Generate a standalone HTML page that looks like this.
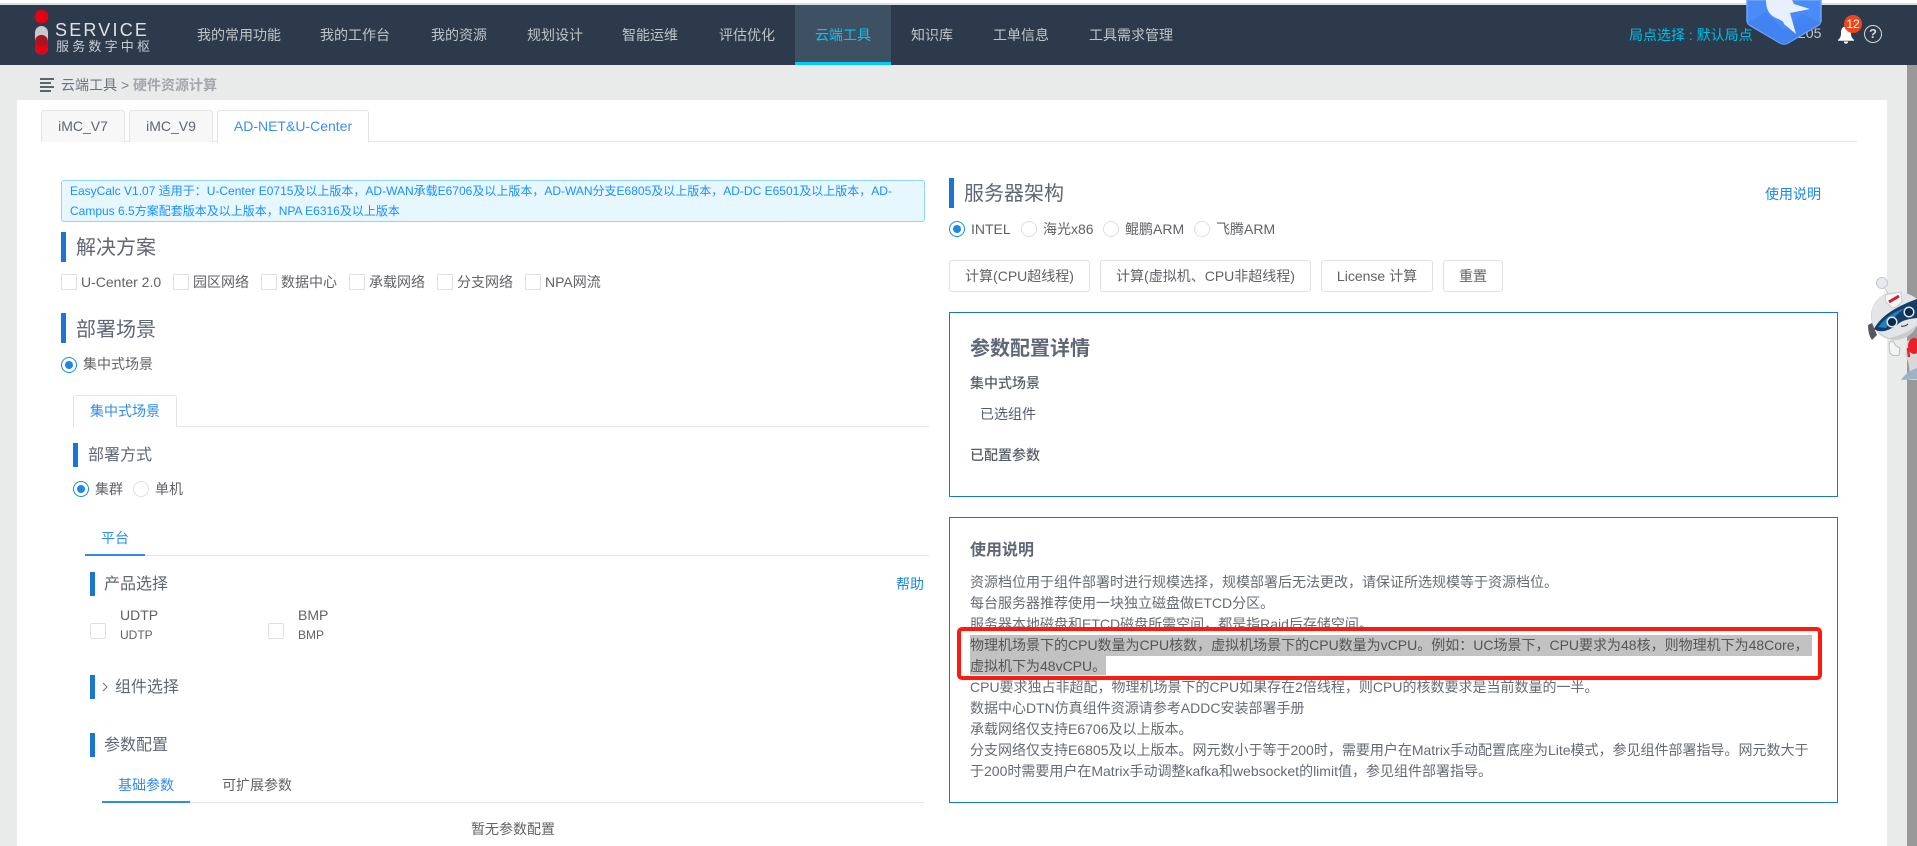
<!DOCTYPE html>
<html lang="zh-CN">
<head>
<meta charset="utf-8">
<title>硬件资源计算</title>
<style>
html,body{margin:0;padding:0;width:1917px;height:846px;overflow:hidden;background:#fff}
body{position:relative;font-family:"Liberation Sans","Noto Sans CJK SC",sans-serif;font-size:14px;color:#606266}
.a,.t,.bar,.cb,.rd{position:absolute;box-sizing:border-box}
.t{white-space:nowrap;line-height:20px;height:20px}
.nav{color:#bfc4ca;font-size:14px}
.blue{color:#1e88e5}
.bar{width:5px;background:#1976d2}
.h20{font-size:20px;color:#5f6774;line-height:30px;height:30px}
.h16{font-size:16px;color:#5f6774;line-height:24px;height:24px}
.cb{width:16px;height:16px;border:1px solid #dcdfe6;border-radius:2px;background:#fff}
.rd{width:16px;height:16px;border:1px solid #dcdfe6;border-radius:50%;background:#fff}
.rd.on{border-color:#1e88e5}
.rd.on:after{content:"";position:absolute;left:3px;top:3px;width:8px;height:8px;border-radius:50%;background:#1e88e5}
.tab{position:absolute;box-sizing:border-box;top:110px;height:32px;border:1px solid #e2e4e8;border-bottom:0;border-radius:3px 3px 0 0;background:#f7f7f7;text-align:center;line-height:30px;color:#5f6774}
.btn{position:absolute;box-sizing:border-box;top:260px;height:32px;border:1px solid #dcdfe6;border-radius:3px;background:#fff;text-align:center;line-height:30px;color:#606266;white-space:nowrap}
.box{position:absolute;box-sizing:border-box;left:949px;width:889px;border:1px solid #1976d2}
.hl{position:absolute;background:#c2c2c2}
</style>
</head>
<body>
<!-- top strip -->
<div class="a" style="left:0;top:3px;width:1917px;height:2px;background:#dedede"></div>
<!-- header -->
<div class="a" style="left:0;top:5px;width:1917px;height:60px;background:#2d3a4b"></div>
<div class="a" style="left:795px;top:5px;width:96px;height:60px;background:#3e5163"></div>
<div class="a" style="left:795px;top:62px;width:96px;height:3px;background:#00ccff"></div>
<!-- logo -->
<svg class="a" style="left:30px;top:8px" width="24" height="50" viewBox="0 0 24 50">
<rect x="5" y="18" width="13" height="28.500" rx="6.500" fill="#c9c9c9"/>
<path d="M5 33.500a6.500 6.500 0 0 1 13 0v6.500a6.500 6.500 0 0 1-13 0z" fill="#e60012"/>
<ellipse cx="11.500" cy="32.500" rx="6" ry="5.500" fill="#a81420"/>
<circle cx="11.500" cy="8.700" r="6.800" fill="#e60012"/>
</svg>
<div class="t" style="left:55px;top:20px;font-size:18px;letter-spacing:2.200px;color:#dfe2e5">SERVICE</div>
<div class="t" style="left:56px;top:37px;font-size:13px;letter-spacing:3.200px;color:#c9cdd2">服务数字中枢</div>
<!-- nav -->
<div class="t nav" style="left:197px;top:25px">我的常用功能</div>
<div class="t nav" style="left:320px;top:25px">我的工作台</div>
<div class="t nav" style="left:431px;top:25px">我的资源</div>
<div class="t nav" style="left:527px;top:25px">规划设计</div>
<div class="t nav" style="left:622px;top:25px">智能运维</div>
<div class="t nav" style="left:719px;top:25px">评估优化</div>
<div class="t nav" style="left:815px;top:25px;color:#00c8f5">云端工具</div>
<div class="t nav" style="left:911px;top:25px">知识库</div>
<div class="t nav" style="left:993px;top:25px">工单信息</div>
<div class="t nav" style="left:1089px;top:25px">工具需求管理</div>
<div class="t" style="left:1629px;top:25px;color:#00bfe6">局点选择 : 默认局点</div>
<div class="t" style="left:1798px;top:23px;color:#c5c9ce;font-size:14px">205</div>
<!-- shield -->
<svg class="a" style="left:1746px;top:0" width="76" height="47" viewBox="0 0 76 47">
<path d="M1 0V20Q1 24 5 26L34 43Q38 45 42 43L71 26Q75 24 75 20V0Z" fill="#4a8cf7" stroke="#6ea6fa" stroke-width="1.500"/>
<path d="M1 23L20 12L38 30L56 14L75 23L42 43Q38 45 34 43Z" fill="#3f7ff0" opacity=".7"/>
<path d="M20 0Q20 14 30 18Q38 21 38 24L50 34L44 13L64 9L48 4L46 0Z" fill="#e8f0fe"/>
</svg>
<!-- bell -->
<svg class="a" style="left:1836px;top:25px" width="20" height="19" viewBox="0 0 20 19">
<path d="M10 1.500C6 1.500 5 4.500 5 8C5 12 4 13 2 15V15.800H18V15C16 13 15 12 15 8C15 4.500 14 1.500 10 1.500Z" fill="#fff"/>
<path d="M7.800 16.500a2.200 2.200 0 0 0 4.400 0z" fill="#fff"/>
</svg>
<div class="a" style="left:1844px;top:15px;width:18px;height:18px;border-radius:50%;background:#f0461a;color:#fff;font-size:12px;line-height:18px;text-align:center">12</div>
<div class="a" style="left:1864px;top:25px;box-sizing:border-box;width:18px;height:18px;border:1.500px solid #d5d8dc;border-radius:50%;color:#d5d8dc;font-size:13px;font-weight:bold;line-height:15px;text-align:center">?</div>
<!-- page bg -->
<div class="a" style="left:0;top:65px;width:1907px;height:35px;background:#e9ebea"></div>
<div class="a" style="left:0;top:100px;width:17px;height:746px;background:#e9ebea"></div>
<div class="a" style="left:1887px;top:65px;width:20px;height:781px;background:#e9ebea"></div>
<div class="a" style="left:1907px;top:65px;width:10px;height:781px;background:#999"></div>
<!-- breadcrumb -->
<svg class="a" style="left:40px;top:78px" width="14" height="14" viewBox="0 0 14 14">
<path d="M0 1H14M0 5H11M0 9H14M0 13H11" stroke="#5c6470" stroke-width="2"/>
</svg>
<div class="t" style="left:61px;top:75px;color:#6b7280">云端工具</div>
<div class="t" style="left:121px;top:75px;color:#7d838c">&gt;</div>
<div class="t" style="left:133px;top:75px;color:#a3a7ad;font-weight:bold">硬件资源计算</div>
<!-- tabs -->
<div class="a" style="left:41px;top:141px;width:1816px;height:1px;background:#e2e4e8"></div>
<div class="tab" style="left:41px;width:84px">iMC_V7</div>
<div class="tab" style="left:129px;width:84px">iMC_V9</div>
<div class="tab" style="left:217px;width:152px;height:33px;background:#fff;color:#3d8ef5">AD-NET&amp;U-Center</div>
<!-- left: alert -->
<div class="a" style="left:61px;top:180px;width:864px;height:42px;box-sizing:border-box;background:#e6f7ff;border:1px solid #91d5ff;border-radius:3px"></div>
<div class="a" style="left:70px;top:181px;font-size:12px;line-height:20px;color:#1890ff;white-space:nowrap">EasyCalc V1.07 适用于：U-Center E0715及以上版本，AD-WAN承载E6706及以上版本，AD-WAN分支E6805及以上版本，AD-DC E6501及以上版本，AD-<br>Campus 6.5方案配套版本及以上版本，NPA E6316及以上版本</div>
<!-- 解决方案 -->
<div class="bar" style="left:61px;top:232px;height:30px"></div>
<div class="t h20" style="left:76px;top:233px">解决方案</div>
<div class="cb" style="left:61px;top:274px"></div><div class="t" style="left:81px;top:272px">U-Center 2.0</div>
<div class="cb" style="left:173px;top:274px"></div><div class="t" style="left:193px;top:272px">园区网络</div>
<div class="cb" style="left:261px;top:274px"></div><div class="t" style="left:281px;top:272px">数据中心</div>
<div class="cb" style="left:349px;top:274px"></div><div class="t" style="left:369px;top:272px">承载网络</div>
<div class="cb" style="left:437px;top:274px"></div><div class="t" style="left:457px;top:272px">分支网络</div>
<div class="cb" style="left:525px;top:274px"></div><div class="t" style="left:545px;top:272px">NPA网流</div>
<!-- 部署场景 -->
<div class="bar" style="left:61px;top:313px;height:30px"></div>
<div class="t h20" style="left:76px;top:315px">部署场景</div>
<div class="rd on" style="left:61px;top:357px"></div><div class="t" style="left:83px;top:354px">集中式场景</div>
<!-- inner tab -->
<div class="a" style="left:73px;top:426px;width:856px;height:1px;background:#e2e4e8"></div>
<div class="a" style="left:73px;top:395px;width:104px;height:32px;box-sizing:border-box;border:1px solid #e2e4e8;border-bottom:0;border-radius:3px 3px 0 0;background:#fff"></div>
<div class="t" style="left:90px;top:401px;color:#2f8bf0">集中式场景</div>
<!-- 部署方式 -->
<div class="bar" style="left:73px;top:443px;height:24px"></div>
<div class="t h16" style="left:88px;top:444px">部署方式</div>
<div class="rd on" style="left:73px;top:481px"></div><div class="t" style="left:95px;top:479px">集群</div>
<div class="rd" style="left:133px;top:481px"></div><div class="t" style="left:155px;top:479px">单机</div>
<!-- 平台 -->
<div class="t" style="left:101px;top:528px;color:#2f8bf0">平台</div>
<div class="a" style="left:85px;top:555px;width:844px;height:1px;background:#e2e4e8"></div>
<div class="a" style="left:85px;top:554px;width:60px;height:2px;background:#2f8bf0"></div>
<!-- 产品选择 -->
<div class="bar" style="left:90px;top:572px;height:24px"></div>
<div class="t h16" style="left:104px;top:573px">产品选择</div>
<div class="t blue" style="left:896px;top:574px">帮助</div>
<div class="cb" style="left:90px;top:623px"></div>
<div class="t" style="left:120px;top:605px">UDTP</div>
<div class="t" style="left:120px;top:625px;font-size:12px">UDTP</div>
<div class="cb" style="left:268px;top:623px"></div>
<div class="t" style="left:298px;top:605px">BMP</div>
<div class="t" style="left:298px;top:625px;font-size:12px">BMP</div>
<!-- 组件选择 -->
<div class="bar" style="left:90px;top:675px;height:24px"></div>
<svg class="a" style="left:101px;top:682px" width="8" height="10" viewBox="0 0 8 10"><path d="M2 1L6 5L2 9" fill="none" stroke="#6b7280" stroke-width="1"/></svg>
<div class="t h16" style="left:115px;top:676px">组件选择</div>
<!-- 参数配置 -->
<div class="bar" style="left:90px;top:733px;height:24px"></div>
<div class="t h16" style="left:104px;top:734px">参数配置</div>
<div class="t" style="left:118px;top:775px;color:#2f8bf0">基础参数</div>
<div class="t" style="left:222px;top:775px">可扩展参数</div>
<div class="a" style="left:102px;top:802px;width:822px;height:1px;background:#e2e4e8"></div>
<div class="a" style="left:102px;top:801px;width:88px;height:2px;background:#2f8bf0"></div>
<div class="t" style="left:471px;top:819px">暂无参数配置</div>
<!-- right: 服务器架构 -->
<div class="bar" style="left:949px;top:178px;height:30px"></div>
<div class="t h20" style="left:964px;top:179px">服务器架构</div>
<div class="t blue" style="left:1765px;top:184px">使用说明</div>
<div class="rd on" style="left:949px;top:221px"></div><div class="t" style="left:971px;top:219px">INTEL</div>
<div class="rd" style="left:1021px;top:221px"></div><div class="t" style="left:1043px;top:219px">海光x86</div>
<div class="rd" style="left:1103px;top:221px"></div><div class="t" style="left:1125px;top:219px">鲲鹏ARM</div>
<div class="rd" style="left:1194px;top:221px"></div><div class="t" style="left:1216px;top:219px">飞腾ARM</div>
<div class="btn" style="left:949px;width:141px">计算(CPU超线程)</div>
<div class="btn" style="left:1100px;width:211px">计算(虚拟机、CPU非超线程)</div>
<div class="btn" style="left:1321px;width:112px">License 计算</div>
<div class="btn" style="left:1443px;width:60px">重置</div>
<!-- box 1 -->
<div class="box" style="top:312px;height:185px"></div>
<div class="t" style="left:970px;top:334px;height:30px;line-height:30px;font-size:20px;font-weight:bold;color:#5f6774">参数配置详情</div>
<div class="t" style="left:970px;top:373px;font-weight:500;color:#555c68">集中式场景</div>
<div class="t" style="left:980px;top:404px;color:#555c68">已选组件</div>
<div class="t" style="left:970px;top:445px;font-weight:500;color:#555c68">已配置参数</div>
<!-- box 2 -->
<div class="box" style="top:517px;height:286px"></div>
<div class="t" style="left:970px;top:541px;font-size:16px;font-weight:bold;color:#5f6774">使用说明</div>
<div class="hl" style="left:970px;top:635px;width:842px;height:21px"></div>
<div class="hl" style="left:970px;top:656px;width:136px;height:19px"></div>
<div class="a" style="left:970px;top:571.500px;line-height:21px;white-space:nowrap;color:#666b73">资源档位用于组件部署时进行规模选择，规模部署后无法更改，请保证所选规模等于资源档位。<br>每台服务器推荐使用一块独立磁盘做ETCD分区。<br>服务器本地磁盘和ETCD磁盘所需空间，都是指Raid后存储空间。<br><span style="color:#555">物理机场景下的CPU数量为CPU核数，虚拟机场景下的CPU数量为vCPU。例如：UC场景下，CPU要求为48核，则物理机下为48Core，<br>虚拟机下为48vCPU。</span><br>CPU要求独占非超配，物理机场景下的CPU如果存在2倍线程，则CPU的核数要求是当前数量的一半。<br>数据中心DTN仿真组件资源请参考ADDC安装部署手册<br>承载网络仅支持E6706及以上版本。<br>分支网络仅支持E6805及以上版本。网元数小于等于200时，需要用户在Matrix手动配置底座为Lite模式，参见组件部署指导。网元数大于<br>于200时需要用户在Matrix手动调整kafka和websocket的limit值，参见组件部署指导。</div>
<div class="a" style="left:957px;top:627px;width:865px;height:53px;box-sizing:border-box;border:4px solid #ff1a10;border-radius:5px"></div>
<!-- robot -->
<svg class="a" style="left:1865px;top:275px" width="52" height="105" viewBox="0 0 52 105">
<circle cx="17" cy="8" r="5.500" fill="#e4ebf0" stroke="#c4c9ce"/>
<path d="M20 13L24 20" stroke="#c4c9ce" stroke-width="1"/>
<path d="M42 66Q48 64 52 65V105H44Q46 90 40 80Z" fill="#d6d8da"/>
<path d="M3 50L7 48L12 60L7 65Q3 60 3 50Z" fill="#55595e"/>
<circle cx="30" cy="41" r="24" fill="#c9cbcd"/>
<path d="M8 32Q14 19 30 17Q44 17 52 24V50Q40 60 24 63Q10 58 7 46Q6 38 8 32Z" fill="#e4e5e6"/>
<path d="M9 54Q18 36 52 24V43Q38 44 32 50Q18 60 9 54Z" fill="#123d66"/>
<path d="M13 52Q24 38 40 33Q28 42 21 53Z" fill="#2a7ac0"/>
<path d="M20 20L36 17L37 27Q31 33 27 33L21 27Z" fill="#f7f7f7" stroke="#ccc"/>
<path d="M24 27L34 21" stroke="#d2202a" stroke-width="3"/>
<circle cx="27" cy="47" r="4.800" fill="#0d2a44" stroke="#d9e8f2" stroke-width="1.500"/>
<circle cx="44" cy="37" r="4.800" fill="#0d2a44" stroke="#d9e8f2" stroke-width="1.500"/>
<path d="M36 51Q40 52 43 49" fill="none" stroke="#333" stroke-width="1"/>
<path d="M24 70Q24 66 28 66L31 71L35 73L34 80Q28 82 25 78Z" fill="#f4f4f4" stroke="#bbb"/>
<ellipse cx="49" cy="71" rx="6" ry="8" fill="#e8202a"/>
<path d="M43 73L44 82" stroke="#e8202a" stroke-width="2.500"/>
<path d="M36 105Q42 96 52 93V104Z" fill="#9fb3c6"/>
</svg>
</body>
</html>
